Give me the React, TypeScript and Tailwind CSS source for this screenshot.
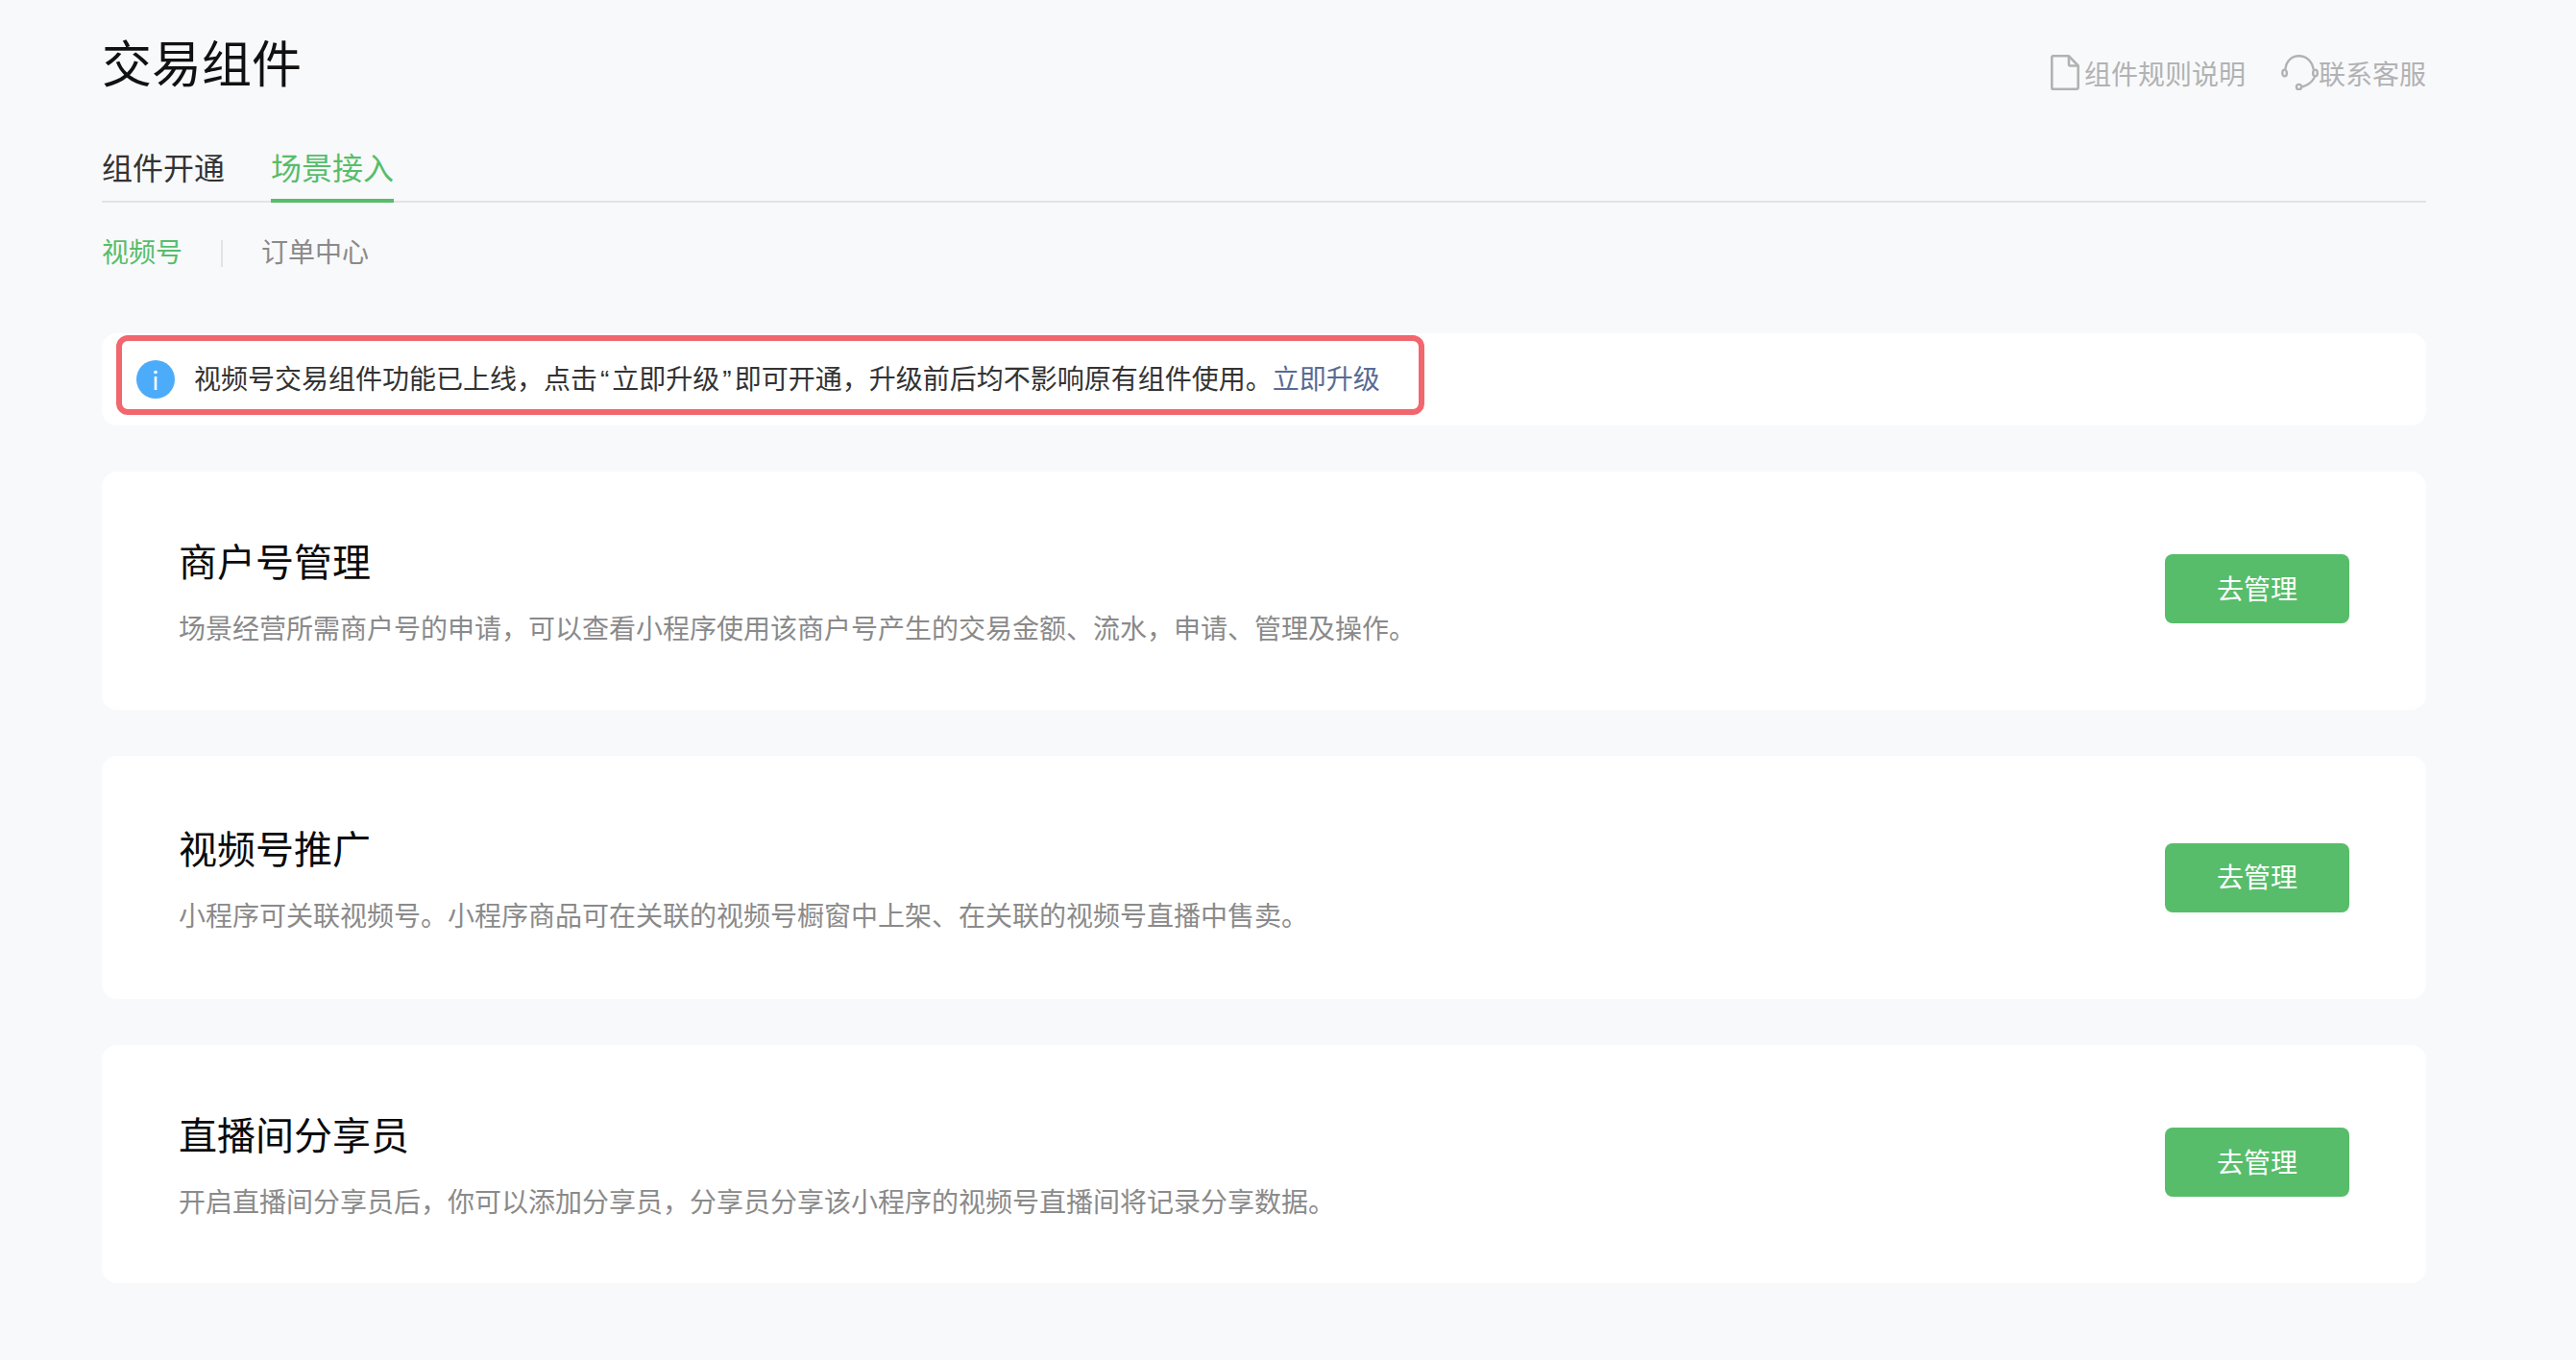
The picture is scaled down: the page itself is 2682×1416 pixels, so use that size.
import React from "react";

const font = { fontFamily: '"Liberation Sans","Noto Sans CJK SC",sans-serif' };

function DocIcon() {
  return (
    <svg width="30" height="37" viewBox="0 0 30 37" fill="none" stroke="#b2b2b2" strokeWidth="2.6" strokeLinejoin="round">
      <path d="M2.500 1.300h16.500l9.700 10.200v22.700a1.500 1.500 0 0 1-1.500 1.500H2.800a1.500 1.500 0 0 1-1.500-1.500V2.500a1.200 1.200 0 0 1 1.200-1.200z" />
      <path d="M19 1.300v8.700a1.500 1.500 0 0 0 1.500 1.500h8.200" />
    </svg>
  );
}

function ServiceIcon() {
  return (
    <svg width="39" height="37" viewBox="0 0 39 37" fill="none" stroke="#b2b2b2" strokeWidth="2.4" strokeLinecap="round">
      <path d="M4.500 14.500C5.500 6.500 11 1.300 18.500 1.300S32 6.500 33.500 14.500" />
      <path d="M34.500 24C32 28.500 27.500 32 21.500 33.500" />
      <ellipse cx="3.600" cy="19" rx="2.300" ry="3.400" />
      <ellipse cx="35.500" cy="19" rx="2.300" ry="3.400" />
      <circle cx="18.500" cy="33.500" r="2.600" />
    </svg>
  );
}

function InfoIcon() {
  return (
    <svg className="mr-5 shrink-0" width="40" height="40" viewBox="0 0 40 40">
      <circle cx="20" cy="20" r="20" fill="#4dacfa" />
      <circle cx="20" cy="12.500" r="1.800" fill="#ffffff" />
      <rect x="18.700" y="17" width="2.600" height="14" fill="#ffffff" />
    </svg>
  );
}

function Card({ title, desc, className, buttonClass }: { title: string; desc: string; className: string; buttonClass: string }) {
  return (
    <div className={`flex items-center justify-between rounded-2xl bg-white px-20 ${className}`}>
      <div className="pt-1">
        <div className="text-[40px] leading-[56px] text-[#0a0a0a]">{title}</div>
        <div className="mt-[22px] text-[28px] leading-10 text-[#8a8a8a]">{desc}</div>
      </div>
      <button className={`h-[72px] w-48 rounded-lg bg-[#57bd6a] pt-[3px] text-[28px] text-white ${buttonClass}`}>去管理</button>
    </div>
  );
}

export default function App() {
  return (
    <div className="min-h-[1416px] bg-[#f8f9fb] pl-[106px] pr-[156px]" style={font}>
      <div className="flex h-[134px] items-start justify-between">
        <h1 className="mt-8 text-[52px] leading-[72px] text-[#111111]">交易组件</h1>
        <div className="mt-[57px] flex items-start text-[28px] leading-[37px] text-[#b2b2b2]">
          <DocIcon />
          <span className="ml-[5px] mt-[3px]">组件规则说明</span>
          <span className="ml-[37px]"><ServiceIcon /></span>
          <span className="mt-[3px]">联系客服</span>
        </div>
      </div>
      <div className="flex gap-12 border-b-2 border-[#e2e3e6] text-[32px]">
        <div className="-mb-[2px] h-[77px] pt-5 leading-[44px] text-[#333333]">组件开通</div>
        <div className="-mb-[2px] h-[77px] border-b-4 border-[#57bd6a] pt-5 leading-[44px] text-[#57bd6a]">场景接入</div>
      </div>
      <div className="mt-[33px] flex h-10 items-center text-[28px] leading-10">
        <span className="text-[#57bd6a]">视频号</span>
        <span className="mx-10 h-7 w-0.5 bg-[#e2e3e6]" />
        <span className="text-[#8a8a8a]">订单中心</span>
      </div>
      <div className="mt-[63px] h-24 rounded-2xl bg-white pl-[15px] pt-[2px]">
        <div className="flex h-[83px] w-[1362px] items-center rounded-[12px] border-[6px] border-[#f2666e] pl-[15px] pt-2 text-[28px] text-[#333333]">
          <InfoIcon />
          <span className="pt-[2px]">视频号交易组件功能已上线，点击<span className="px-[3px]">“</span>立即升级<span className="px-[3px]">”</span>即可开通，升级前后均不影响原有组件使用。<span className="text-[#576b95]">立即升级</span></span>
        </div>
      </div>
      <Card className="mt-12 h-[248px]" buttonClass="-mt-1" title="商户号管理" desc="场景经营所需商户号的申请，可以查看小程序使用该商户号产生的交易金额、流水，申请、管理及操作。" />
      <Card className="mt-12 h-[253px]" buttonClass="" title="视频号推广" desc="小程序可关联视频号。小程序商品可在关联的视频号橱窗中上架、在关联的视频号直播中售卖。" />
      <Card className="mt-12 h-[248px]" buttonClass="-mt-1" title="直播间分享员" desc="开启直播间分享员后，你可以添加分享员，分享员分享该小程序的视频号直播间将记录分享数据。" />
    </div>
  );
}
